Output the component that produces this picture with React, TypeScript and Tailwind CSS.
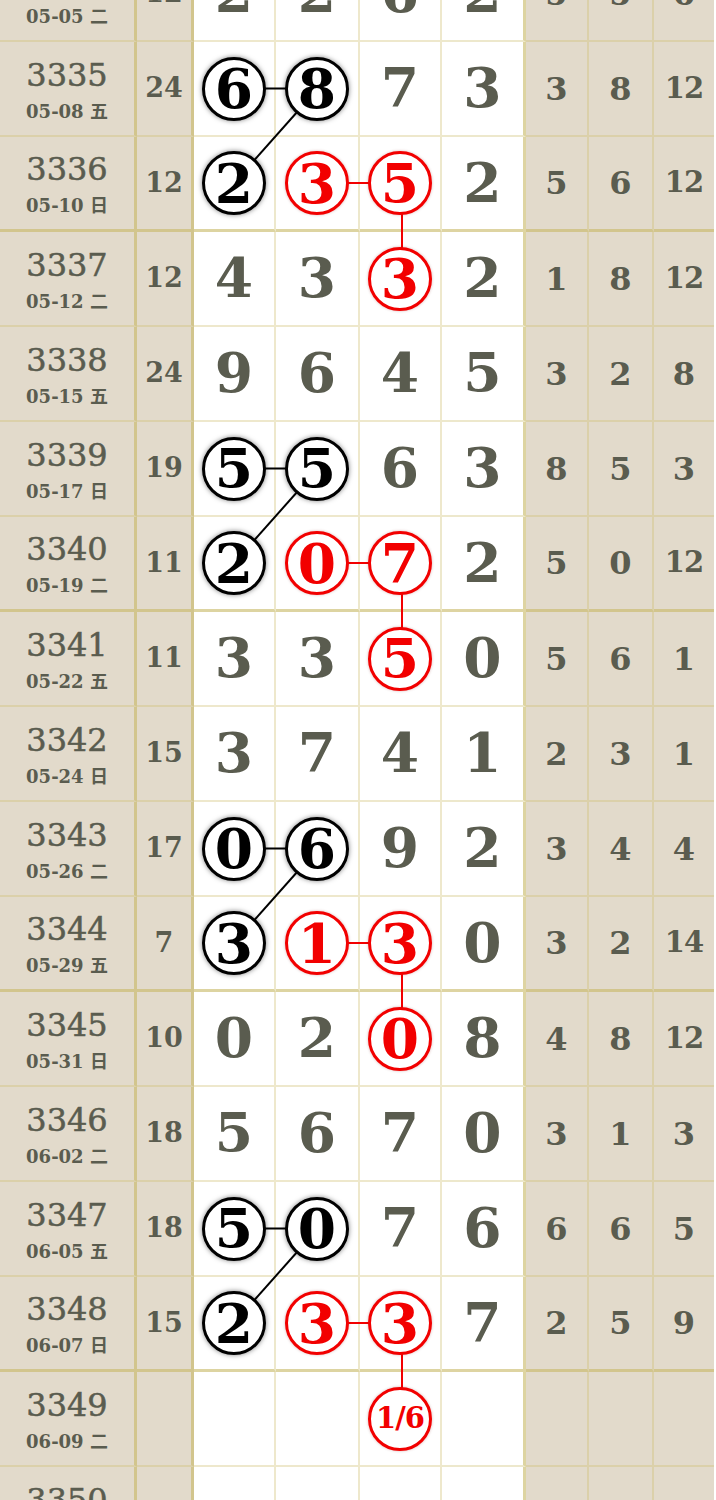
import React from 'react';

type Row = {
  no: string;
  date: string;
  sum: string;
  nums: string[];
  right: string[];
  black?: number[];
  red?: number[];
};

const ROW_H = 95;

const rows: Row[] = [
  {no: '3334', date: '05-05 二', sum: '12', nums: ['2', '2', '6', '2'], right: ['5', '5', '6']},
  {no: '3335', date: '05-08 五', sum: '24', nums: ['6', '8', '7', '3'], right: ['3', '8', '12'], black: [0, 1]},
  {no: '3336', date: '05-10 日', sum: '12', nums: ['2', '3', '5', '2'], right: ['5', '6', '12'], black: [0], red: [1, 2]},
  {no: '3337', date: '05-12 二', sum: '12', nums: ['4', '3', '3', '2'], right: ['1', '8', '12'], red: [2]},
  {no: '3338', date: '05-15 五', sum: '24', nums: ['9', '6', '4', '5'], right: ['3', '2', '8']},
  {no: '3339', date: '05-17 日', sum: '19', nums: ['5', '5', '6', '3'], right: ['8', '5', '3'], black: [0, 1]},
  {no: '3340', date: '05-19 二', sum: '11', nums: ['2', '0', '7', '2'], right: ['5', '0', '12'], black: [0], red: [1, 2]},
  {no: '3341', date: '05-22 五', sum: '11', nums: ['3', '3', '5', '0'], right: ['5', '6', '1'], red: [2]},
  {no: '3342', date: '05-24 日', sum: '15', nums: ['3', '7', '4', '1'], right: ['2', '3', '1']},
  {no: '3343', date: '05-26 二', sum: '17', nums: ['0', '6', '9', '2'], right: ['3', '4', '4'], black: [0, 1]},
  {no: '3344', date: '05-29 五', sum: '7', nums: ['3', '1', '3', '0'], right: ['3', '2', '14'], black: [0], red: [1, 2]},
  {no: '3345', date: '05-31 日', sum: '10', nums: ['0', '2', '0', '8'], right: ['4', '8', '12'], red: [2]},
  {no: '3346', date: '06-02 二', sum: '18', nums: ['5', '6', '7', '0'], right: ['3', '1', '3']},
  {no: '3347', date: '06-05 五', sum: '18', nums: ['5', '0', '7', '6'], right: ['6', '6', '5'], black: [0, 1]},
  {no: '3348', date: '06-07 日', sum: '15', nums: ['2', '3', '3', '7'], right: ['2', '5', '9'], black: [0], red: [1, 2]},
  {no: '3349', date: '06-09 二', sum: '', nums: ['', '', '1/6', ''], right: ['', '', ''], red: [2]},
  {no: '3350', date: '06-12 五', sum: '', nums: ['', '', '', ''], right: ['', '', '']},
];

// centre x of the four white columns
const whiteX = [234, 318, 402, 485];

const thick = (no: string) => (Number(no) - 3336) % 4 === 0;

const centerY = (i: number) => {
  const b = thick(rows[i].no) ? 3 : 2;
  return i * ROW_H + (ROW_H - b) / 2;
};

// [row, col] -> [row, col]
const links: {a: [number, number]; b: [number, number]; red?: boolean}[] = [];
[1, 5, 9, 13].forEach((r) => {
  links.push({a: [r, 0], b: [r, 1]});
  links.push({a: [r, 1], b: [r + 1, 0]});
  links.push({a: [r + 1, 1], b: [r + 1, 2], red: true});
  links.push({a: [r + 1, 2], b: [r + 2, 2], red: true});
});

const thin = 'border-r-2 border-r-[rgba(205,190,110,0.35)]';
const fat = 'border-r-[3px] border-r-[rgba(200,184,100,0.6)]';

function Ball({v, red}: {v: string; red?: boolean}) {
  if (red) {
    return (
      <div className={'relative z-10 flex h-[64px] w-[64px] items-center justify-center rounded-full border-[3px] border-[#f20000] bg-white font-bold text-[#f20000] shadow-[0_0_3px_rgba(120,0,0,0.3)] ' + (v.length > 1 ? 'text-[29px] tracking-[-1px]' : 'text-[55px]')}>
        <span className="leading-none">{v}</span>
      </div>
    );
  }
  return (
    <div className="relative z-10 flex h-[64px] w-[64px] items-center justify-center rounded-full border-[3px] border-black bg-white text-[55px] font-bold text-black shadow-[0_0_5px_rgba(0,0,0,0.5)]">
      <span className="leading-none">{v}</span>
    </div>
  );
}

export default function App(): JSX.Element {
  return (
    <div className="h-[1500px] w-[716px] overflow-hidden bg-white font-['DejaVu_Serif','Noto_Sans_CJK_SC',serif] text-[#5a5c4f]">
      <div className="relative -mt-[53px]">
        {rows.map((r) => {
          const bottom = thick(r.no)
            ? 'border-b-[3px] border-b-[rgba(200,184,100,0.6)]'
            : 'border-b-2 border-b-[rgba(205,190,110,0.35)]';
          return (
            <div key={r.no} className="flex h-[95px]">
              <div className={`flex w-[137px] flex-col items-center justify-center bg-[#e2dacb] pt-[4px] ${fat} ${bottom}`}>
                <div className="text-[32px] leading-[34px] [-webkit-text-stroke:0.5px_#5a5c4f]">{r.no}</div>
                <div className="mt-[8px] text-[18px] font-bold leading-[24px]">{r.date}</div>
              </div>
              <div className={`flex w-[57px] items-center justify-center bg-[#e2dacb] text-[27px] font-bold ${fat} ${bottom}`}>
                {r.sum}
              </div>
              {r.nums.map((n, c) => {
                const w = ['w-[82px]', 'w-[84px]', 'w-[82px]', 'w-[84px]'][c];
                const br = c === 3 ? fat : thin;
                const isBlack = r.black?.includes(c);
                const isRed = r.red?.includes(c);
                return (
                  <div key={c} className={`flex ${w} items-center justify-center bg-white text-[55px] font-bold ${br} ${bottom}`}>
                    {isBlack || isRed ? <Ball v={n} red={isRed} /> : n}
                  </div>
                );
              })}
              {r.right.map((n, c) => {
                const w = ['w-[63px]', 'w-[65px]', 'w-[60px]'][c];
                return (
                  <div key={c} className={`flex ${w} items-center justify-center bg-[#e2dacb] font-bold ${n.length > 1 ? 'text-[29px] tracking-[-1px]' : 'text-[32px]'} ${c < 2 ? thin : ''} ${bottom}`}>
                    {n}
                  </div>
                );
              })}
            </div>
          );
        })}
        <svg className="pointer-events-none absolute left-0 top-0" width={716} height={rows.length * ROW_H}>
          {links.map((l, i) => (
            <line
              key={i}
              x1={whiteX[l.a[1]]}
              y1={centerY(l.a[0])}
              x2={whiteX[l.b[1]]}
              y2={centerY(l.b[0])}
              stroke={l.red ? '#f20000' : '#000'}
              strokeWidth={2}
            />
          ))}
        </svg>
      </div>
    </div>
  );
}
